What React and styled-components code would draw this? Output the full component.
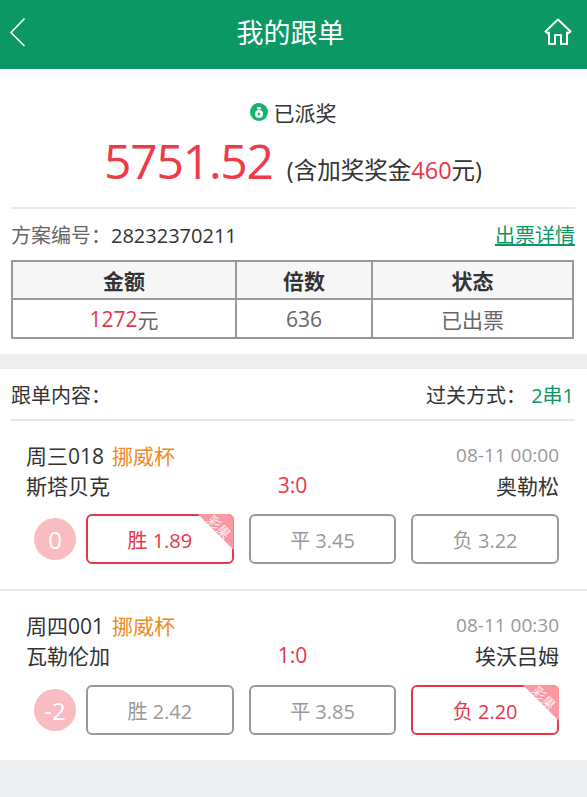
import styled, { createGlobalStyle } from "styled-components";

const GlobalStyle = createGlobalStyle`
  html, body { margin: 0; padding: 0; background: #eceeef; }
  body { font-family: "Open Sans", "Noto Sans CJK SC", sans-serif; color: #333; }
  * { box-sizing: border-box; }
`;

const Page = styled.div`
  width: 587px;
  min-height: 797px;
  background: #eceeef;
`;

const Header = styled.header`
  height: 69px;
  background: #0c9864;
  display: grid;
  grid-template-columns: 1fr auto 1fr;
  align-items: center;
  padding: 0 15px 5px 9px;
  color: #fff;
`;

const Title = styled.h1`
  margin: 0;
  font-size: 27px;
  font-weight: 400;
  line-height: 1;
`;

const HomeLink = styled.div`
  display: flex;
  justify-content: flex-end;
`;

const SummarySection = styled.section`
  background: #fff;
  padding: 28px 12px 15px 11px;
  margin-bottom: 15px;
`;

const FollowSection = styled.section`
  background: #fff;
`;

const Status = styled.div`
  display: flex;
  justify-content: center;
  align-items: center;
  gap: 6px;
  height: 30px;
  font-size: 21px;
`;

const Amount = styled.div`
  display: flex;
  justify-content: center;
  align-items: baseline;
  gap: 14px;
  height: 80px;
  line-height: 68px;
  font-size: 23.5px;
`;

const Big = styled.span`
  font-size: 48px;
  letter-spacing: -1.2px;
  color: #ef3a4a;
`;

const Red = styled.span`
  color: #e8374a;
`;

const Rule = styled.div`
  height: 2px;
  background: #e8e8e8;
`;

const InsetRule = styled(Rule)`
  margin: 0 12px 0 11px;
`;

const Row = styled.div`
  display: flex;
  justify-content: space-between;
  align-items: center;
  height: 51px;
  font-size: 20px;
`;

const FollowRow = styled(Row)`
  height: 50px;
  padding: 0 13px 0 11px;
`;

const Grey = styled.span`
  color: #666;
`;

const Link = styled.a`
  color: #0c9864;
  text-decoration: underline;
`;

const Green = styled.span`
  color: #0c9864;
`;

const Table = styled.div`
  display: grid;
  grid-template-columns: 224px 136px 1fr;
  grid-template-rows: 38px 37px;
  width: 563px;
  height: 79px;
  border: 2px solid #999;
`;

const Cell = styled.div`
  display: flex;
  align-items: center;
  justify-content: center;
  font-size: 21px;
  color: ${(p) => (p.$head ? "#333" : "#666")};
  border-right: ${(p) => (p.$last ? "none" : "2px solid #999")};
  border-bottom: ${(p) => (p.$head ? "2px solid #999" : "none")};
  background: ${(p) => (p.$head ? "#f6f6f6" : "#fff")};
  font-weight: ${(p) => (p.$head ? 700 : 400)};
`;

const Match = styled.div`
  padding: 19px 28px 25px 26px;
  border-bottom: ${(p) => (p.$last ? "none" : "2px solid #e8e8e8")};
`;

const MatchLine = styled.div`
  display: grid;
  grid-template-columns: 1fr auto 1fr;
  align-items: center;
  height: 30px;
  font-size: 21px;
`;

const MatchName = styled.span`
  grid-column: 1 / 3;
`;

const League = styled.span`
  color: #ee8a24;
  margin-left: 8px;
`;

const Time = styled.span`
  grid-column: 3;
  text-align: right;
  font-size: 19px;
  color: #999;
`;

const Away = styled.span`
  text-align: right;
`;

const Score = styled.span`
  color: #e8374a;
`;

const Odds = styled.div`
  display: flex;
  align-items: center;
  margin: ${(p) => p.$top}px 0 0 8px;
  gap: 15px;
`;

const Handicap = styled.div`
  flex: none;
  width: 42px;
  height: 42px;
  margin-right: -5px;
  border-radius: 50%;
  background: #f9bcc3;
  color: #fff;
  font-size: 24px;
  display: flex;
  align-items: center;
  justify-content: center;
`;

const Pick = styled.div`
  position: relative;
  flex: 1;
  height: 50px;
  border-radius: 6px;
  border: 2px solid ${(p) => (p.$on ? "#e8374a" : "#999")};
  color: ${(p) => (p.$on ? "#e8374a" : "#999")};
  font-size: 20px;
  display: flex;
  align-items: center;
  justify-content: center;
`;

const Ribbon = styled.span`
  position: absolute;
  top: -2px;
  right: -2px;
  width: 36px;
  height: 36px;
  border-top-right-radius: 6px;
  background: #fb98a4;
  clip-path: polygon(0 0, 100% 0, 100% 100%);
`;

const RibbonText = styled.span`
  position: absolute;
  top: 4px;
  right: -2px;
  width: 30px;
  color: #fff;
  opacity: 0.9;
  font-size: 13px;
  line-height: 14px;
  text-align: center;
  transform: rotate(45deg);
`;

const BackIcon = () => (
  <svg width="18" height="30" viewBox="0 0 18 30" fill="none" stroke="#fff" strokeWidth="1.6">
    <path d="M15.5 1.5 2 15.5 15.5 29" />
  </svg>
);

const HomeIcon = () => (
  <svg width="28" height="28" viewBox="0 0 28 28" fill="none" stroke="#fff" strokeWidth="2" strokeLinejoin="round">
    <path d="M1.5 13.5 14 1.5l12.5 12-2.5 2-1-1V26h-6v-9h-6v9H5V14.5l-1 1z" />
  </svg>
);

const BagIcon = () => (
  <svg width="18" height="18" viewBox="0 0 18 18">
    <circle cx="9" cy="9" r="9" fill="#14b26c" />
    <circle cx="9" cy="11" r="4" fill="#fff" />
    <rect x="7" y="4" width="4" height="2.6" rx="1" fill="#fff" />
    <circle cx="9" cy="11" r="1.3" fill="#14b26c" />
  </svg>
);

const matches = [
  {
    id: "周三018",
    time: "08-11 00:00",
    home: "斯塔贝克",
    score: "3:0",
    away: "奥勒松",
    handicap: "0",
    odds: ["胜 1.89", "平 3.45", "负 3.22"],
    hit: 0,
    top: 14,
  },
  {
    id: "周四001",
    time: "08-11 00:30",
    home: "瓦勒伦加",
    score: "1:0",
    away: "埃沃吕姆",
    handicap: "-2",
    odds: ["胜 2.42", "平 3.85", "负 2.20"],
    hit: 2,
    top: 15,
  },
];

export default function App() {
  return (
    <Page>
      <GlobalStyle />
      <Header>
        <BackIcon />
        <Title>我的跟单</Title>
        <HomeLink>
          <HomeIcon />
        </HomeLink>
      </Header>

      <SummarySection>
        <Status>
          <BagIcon />
          已派奖
        </Status>
        <Amount>
          <Big>5751.52</Big>
          <span>
            (含加奖奖金<Red>460</Red>元)
          </span>
        </Amount>
        <Rule />
        <Row>
          <span>
            <Grey>方案编号：</Grey>28232370211
          </span>
          <Link>出票详情</Link>
        </Row>
        <Table>
          <Cell $head>金额</Cell>
          <Cell $head>倍数</Cell>
          <Cell $head $last>状态</Cell>
          <Cell>
            <Red>1272</Red>元
          </Cell>
          <Cell>636</Cell>
          <Cell $last>已出票</Cell>
        </Table>
      </SummarySection>

      <FollowSection>
        <FollowRow>
          <span>跟单内容：</span>
          <span>
            过关方式： <Green>2串1</Green>
          </span>
        </FollowRow>
        <InsetRule />
        {matches.map((m, i) => (
          <Match key={m.id} $last={i === matches.length - 1}>
            <MatchLine>
              <MatchName>
                {m.id}
                <League>挪威杯</League>
              </MatchName>
              <Time>{m.time}</Time>
            </MatchLine>
            <MatchLine>
              <span>{m.home}</span>
              <Score>{m.score}</Score>
              <Away>{m.away}</Away>
            </MatchLine>
            <Odds $top={m.top}>
              <Handicap>{m.handicap}</Handicap>
              {m.odds.map((o, j) => (
                <Pick key={o} $on={j === m.hit}>
                  {o}
                  {j === m.hit && (
                    <>
                      <Ribbon />
                      <RibbonText>彩果</RibbonText>
                    </>
                  )}
                </Pick>
              ))}
            </Odds>
          </Match>
        ))}
      </FollowSection>
    </Page>
  );
}
